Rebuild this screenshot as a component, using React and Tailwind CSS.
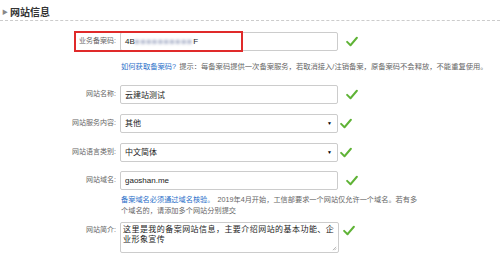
import { useState } from 'react';

function Check({ className = '' }) {
  return (
    <svg viewBox="0 0 16 14" className={`w-[12px] h-[11px] ${className}`}>
      <path d="M1.5 7.5 L6 12 L14.5 2" fill="none" stroke="#5fb336" strokeWidth="2.6" strokeLinecap="round" strokeLinejoin="round" />
    </svg>
  );
}

function Row({ label, children, check = 'ml-[8px]', top, relative }) {
  return (
    <div className={`flex items-center ${top} ${relative ? 'relative' : ''}`}>
      <div className="w-[116px] shrink-0 text-right text-[7px] text-[#666]">{label}</div>
      <div className="ml-[4px] flex items-center">
        {children}
        <Check className={check} />
      </div>
    </div>
  );
}

const inputCls = 'w-[218px] h-[19px] border border-[#ccc] rounded-[2px] bg-white px-[4px] flex items-center text-[8px] text-[#222]';

export default function App() {
  const [name, setName] = useState('云建站测试');
  const [domain, setDomain] = useState('gaoshan.me');

  return (
    <div className="w-[500px] h-[273px] bg-white overflow-hidden font-['Liberation_Sans','Noto_Sans_CJK_SC',sans-serif]">
      <div className="flex items-center h-[19px] pt-[6px]">
        <span className="ml-[2px] text-[6px] text-[#888]">▶</span>
        <span className="ml-[2px] text-[10px] font-bold text-[#333]">网站信息</span>
      </div>
      <div className="mt-[1px] border-b border-dashed border-[#ccc]" />

      <Row label="业务备案码:" top="mt-[11px]" relative>
        <div className={inputCls}>
          <span>4B</span>
          <span className="blur-[1.5px] text-[#a8b0c8] tracking-[1px]">■■■■■■■■■■</span>
          <span>F</span>
        </div>
        <div className="absolute left-[74px] top-[-1px] w-[169px] h-[21px] border-2 border-[#e02a2a]" />
      </Row>

      <div className="ml-[121px] mt-[11px] text-[7.3px] leading-[10px] text-[#666]">
        <span className="text-[#2a6fc9]">如何获取备案码?</span>
        <span className="ml-[3px]">提示：每备案码提供一次备案服务，若取消接入/注销备案，原备案码不会释放，不能重复使用。</span>
      </div>

      <Row label="网站名称:" top="mt-[13px]">
        <input value={name} onChange={e => setName(e.target.value)} className={`${inputCls} outline-none`} />
      </Row>

      <Row label="网站服务内容:" top="mt-[10px]" check="ml-[2px]">
        <div className={`${inputCls} justify-between`}>
          <span>其他</span>
          <span className="text-[5px] text-black mr-[1px]">▼</span>
        </div>
      </Row>

      <Row label="网站语言类别:" top="mt-[10px]" check="ml-[2px]">
        <div className={`${inputCls} justify-between`}>
          <span>中文简体</span>
          <span className="text-[5px] text-black mr-[1px]">▼</span>
        </div>
      </Row>

      <Row label="网站域名:" top="mt-[9px]">
        <input value={domain} onChange={e => setDomain(e.target.value)} className={`${inputCls} outline-none`} />
      </Row>

      <div className="ml-[121px] mt-[4px] text-[7.2px] leading-[11px] text-[#666]">
        <span className="text-[#2a6fc9]">备案域名必须通过域名核验。</span>
        <span className="ml-[3px]">2019年4月开始，工信部要求一个网站仅允许一个域名。若有多</span>
        <br />
        <span>个域名的，请添加多个网站分别提交</span>
      </div>

      <div className="flex items-start mt-[6px]">
        <div className="w-[116px] shrink-0 text-right text-[7px] text-[#666] pt-[3px]">网站简介:</div>
        <div className="ml-[4px] flex items-start">
          <div className="w-[219px] h-[31px] border border-[#ccc] rounded-[2px] px-[2px] pt-[1px] text-[8px] leading-[10px] tracking-[0.45px] text-[#222] font-['Noto_Sans_CJK_SC',monospace] relative">
            这里是我的备案网站信息，主要介绍网站的基本功能、企业形象宣传
            <svg viewBox="0 0 6 6" className="absolute right-[1px] bottom-[1px] w-[5px] h-[5px]">
              <path d="M5 1 L1 5 M5 3 L3 5" stroke="#999" strokeWidth="0.8" />
            </svg>
          </div>
          <Check className="ml-[4px] mt-[3px]" />
        </div>
      </div>
    </div>
  );
}
